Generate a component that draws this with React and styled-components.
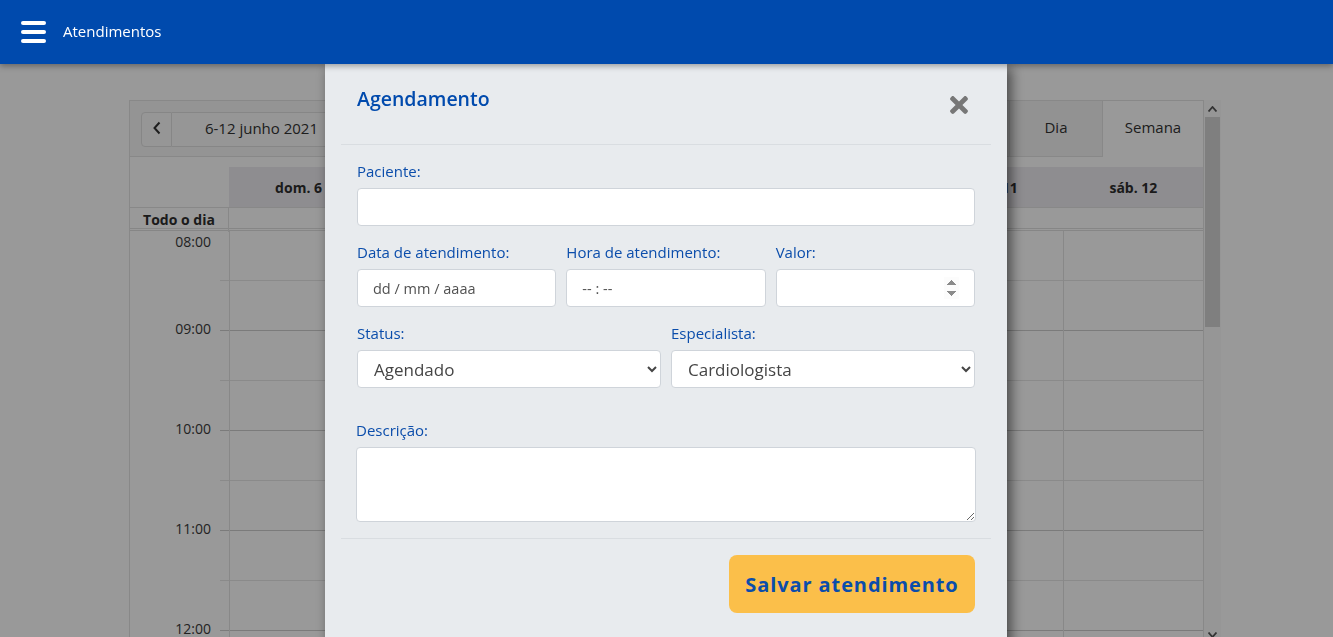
import React from 'react'
import styled, { createGlobalStyle } from 'styled-components'
import { FaTimes } from 'react-icons/fa'

const GlobalStyle = createGlobalStyle`
  html, body {
    margin: 0;
    padding: 0;
    height: 100%;
    overflow: hidden;
    background: #fff;
    font-family: "Open Sans", "Liberation Sans", sans-serif;
  }
  * { box-sizing: border-box; }
`

const Header = styled.header`
  position: relative;
  z-index: 30;
  height: 64px;
  background: #004aad;
  display: flex;
  align-items: center;
  padding-left: 21px;
  gap: 17px;
  box-shadow: 0 2px 6px rgba(0, 0, 0, 0.35);
`
const Title = styled.span`
  color: #fff;
  font-size: 15px;
  margin-top: -2px;
`

const Page = styled.main`
  padding: 36px 0 0 129px;
`

const Frame = styled.div`
  width: 1092px;
  height: 543px;
  display: flex;
  overflow: hidden;
`
const Calendar = styled.div`
  flex: 1;
  border: 1px solid #e3e3e3;
  border-bottom: none;
  color: #333;
  font-size: 14px;
`
const Toolbar = styled.div`
  height: 56px;
  background: #f7f7f7;
  border-bottom: 1px solid #e3e3e3;
  display: flex;
  justify-content: space-between;
`
const NavGroup = styled.div`
  display: flex;
  align-items: center;
  padding-left: 11px;
  padding-top: 1px;
`
const NavButton = styled.div`
  height: 35px;
  display: flex;
  align-items: center;
  justify-content: center;
  border: 1px solid #e0e0e0;
  background: #fafafa;
  width: ${p => p.$w}px;
  border-radius: ${p => (p.$first ? '4px 0 0 4px' : '0')};
  border-left: ${p => (p.$first ? '1px solid #e0e0e0' : 'none')};
  font-size: 15px;
  color: #333;
  padding-bottom: 2px;
`
const Tabs = styled.div`
  display: flex;
`
const Tab = styled.div`
  width: ${p => p.$w}px;
  height: ${p => (p.$active ? '56px' : '55px')};
  display: flex;
  align-items: center;
  justify-content: center;
  padding-bottom: ${p => (p.$active ? '5px' : '4px')};
  border-left: 1px solid #e3e3e3;
  background: ${p => (p.$active ? '#fff' : '#f3f3f3')};
  font-size: 15px;
  color: #333;
`

const HeadRow = styled.div`
  margin-top: 10px;
  display: grid;
  grid-template-columns: 99px repeat(7, 1fr);
  height: 40px;
`
const DayHead = styled.div`
  background: #edebf0;
  display: flex;
  align-items: center;
  justify-content: center;
  font-weight: 700;
  font-size: 14px;
  color: #2e2e2e;
`
const AllDayRow = styled.div`
  display: grid;
  grid-template-columns: 99px 1fr;
  height: 24px;
  border-top: 1px solid #e3e3e3;
  border-bottom: 3px double #e0e0e0;
`
const AllDayLabel = styled.div`
  border-right: 1px solid #e3e3e3;
  text-align: center;
  font-weight: 700;
  font-size: 14px;
  line-height: 24px;
  color: #2e2e2e;
`

const Body = styled.div`
  display: grid;
  grid-template-columns: 100px 1fr;
`
const slotLines = `repeating-linear-gradient(to bottom, transparent 0 49px, #e6e6e6 49px 50px, transparent 50px 99px, #cdcdcd 99px 100px)`

const TimeAxis = styled.div`
  border-right: 1px solid #e3e3e3;
  background: ${slotLines} right top / 9px 100% no-repeat;
  padding-top: 1px;
`
const HourLabel = styled.div`
  height: ${p => (p.$first ? '87px' : '100px')};
  line-height: 19px;
  text-align: right;
  padding-right: 18px;
  font-size: 14px;
  color: #3a3a3a;
`
const Lanes = styled.div`
  display: grid;
  grid-template-columns: repeat(7, 1fr);
  height: 600px;
  background: ${slotLines};
`
const Lane = styled.div`
  border-right: 1px solid #e3e3e3;
  &:last-child { border-right: none; }
`

const ScrollTrack = styled.div`
  width: 17px;
  background: #fafafa;
  display: flex;
  flex-direction: column;
`
const ScrollArrow = styled.div`
  height: 17px;
  display: flex;
  align-items: center;
  justify-content: center;
`
const ScrollThumb = styled.div`
  height: 210px;
  margin: 0 1px;
  background: #d4d4d4;
`
const ScrollRest = styled.div`
  flex: 1;
`

const Backdrop = styled.div`
  position: fixed;
  inset: 0;
  z-index: 10;
  background: rgba(0, 0, 0, 0.4);
`

const Modal = styled.div`
  position: fixed;
  z-index: 20;
  top: 64px;
  left: 325px;
  width: 682px;
  background: #e8ebee;
  padding: 0 16px 40px;
  box-shadow: 4px 4px 12px rgba(0, 0, 0, 0.55);
`
const ModalHead = styled.div`
  height: 81px;
  display: flex;
  justify-content: space-between;
  align-items: flex-start;
  padding: 23px 19px 0 16px;
  border-bottom: 1px solid #d9dde1;
`
const ModalTitle = styled.h2`
  margin: 0;
  font-size: 19.5px;
  line-height: 24px;
  font-weight: 600;
  color: #004aad;
`
const Close = styled.div`
  color: #777;
  font-size: 26px;
  margin-top: 5px;
  display: flex;
`
const Form = styled.div`
  padding: 16px;
  border-bottom: 1px solid #d9dde1;
  display: flex;
  flex-direction: column;
`
const Row = styled.div`
  display: grid;
  grid-template-columns: ${p => p.$cols};
  gap: 10px;
  margin-top: ${p => p.$top || 0}px;
`
const Field = styled.div`
  display: flex;
  flex-direction: column;
  gap: 7px;
`
const Label = styled.label`
  font-size: 15px;
  line-height: 20px;
  color: #0b4dab;
`
const TextInput = styled.input`
  height: 38px;
  width: 100%;
  border: 1px solid #cfd4da;
  border-radius: 4px;
  background: #fff;
  padding: 0 15px;
  font-family: "Open Sans", sans-serif;
  font-size: 14.5px;
  color: #444;
  &::placeholder { color: #505050; }
  &::-webkit-inner-spin-button {
    opacity: 1;
    height: 22px;
  }
`
const Select = styled.select`
  height: 38px;
  width: 100%;
  border: 1px solid #cfd4da;
  border-radius: 4px;
  background: #fff;
  padding: 0 12px;
  font-family: "Open Sans", sans-serif;
  font-size: 17px;
  color: #454545;
`
const DescField = styled(Field)`
  margin: 32px -1px 0;
`
const TextArea = styled.textarea`
  height: 75px;
  width: 100%;
  border: 1px solid #cfd4da;
  border-radius: 4px;
  background: #fff;
  resize: vertical;
`
const Footer = styled.div`
  display: flex;
  justify-content: flex-end;
  padding: 16px 16px 0;
`
const SaveButton = styled.button`
  height: 58px;
  width: 246px;
  border: none;
  border-radius: 8px;
  background: #fbbf4a;
  color: #0b4dab;
  font-family: "Open Sans", sans-serif;
  font-weight: 700;
  font-size: 20px;
  letter-spacing: 0.9px;
`

const days = ['dom. 6', 'seg. 7', 'ter. 8', 'qua. 9', 'qui. 10', 'sex. 11', 'sáb. 12']
const hours = ['08:00', '09:00', '10:00', '11:00', '12:00', '13:00']

function Burger() {
  return (
    <svg width="25" height="22" viewBox="0 0 25 22">
      <rect x="0" y="0" width="25" height="4" rx="2" fill="#fff" />
      <rect x="0" y="9" width="25" height="4" rx="2" fill="#fff" />
      <rect x="0" y="18" width="25" height="4" rx="2" fill="#fff" />
    </svg>
  )
}

function Arrow({ up }) {
  return (
    <svg width="9" height="6" viewBox="0 0 9 6">
      <path d={up ? 'M0.5 5.5 L4.5 1 L8.5 5.5' : 'M0.5 0.5 L4.5 5 L8.5 0.5'} fill="none" stroke="#555" strokeWidth="1.8" />
    </svg>
  )
}

export default function App() {
  return (
    <>
      <GlobalStyle />
      <Header>
        <Burger />
        <Title>Atendimentos</Title>
      </Header>

      <Page>
        <Frame>
          <Calendar>
            <Toolbar>
              <NavGroup>
                <NavButton $first $w={31}>
                  <svg width="10" height="14" viewBox="0 0 10 14">
                    <path d="M7.5 1.5 L2.5 7 L7.5 12.5" fill="none" stroke="#333" strokeWidth="2" />
                  </svg>
                </NavButton>
                <NavButton $w={180}>6-12 junho 2021</NavButton>
              </NavGroup>
              <Tabs>
                <Tab $w={93}>Mês</Tab>
                <Tab $w={93}>Dia</Tab>
                <Tab $w={101} $active>Semana</Tab>
              </Tabs>
            </Toolbar>

            <HeadRow>
              <div />
              {days.map(d => <DayHead key={d}>{d}</DayHead>)}
            </HeadRow>
            <AllDayRow>
              <AllDayLabel>Todo o dia</AllDayLabel>
              <div />
            </AllDayRow>

            <Body>
              <TimeAxis>
                {hours.map((h, i) => <HourLabel key={h} $first={i === 0}>{h}</HourLabel>)}
              </TimeAxis>
              <Lanes>
                {days.map(d => <Lane key={d} />)}
              </Lanes>
            </Body>
          </Calendar>

          <ScrollTrack>
            <ScrollArrow><Arrow up /></ScrollArrow>
            <ScrollThumb />
            <ScrollRest />
            <ScrollArrow><Arrow /></ScrollArrow>
          </ScrollTrack>
        </Frame>
      </Page>

      <Backdrop />

      <Modal>
        <ModalHead>
          <ModalTitle>Agendamento</ModalTitle>
          <Close><FaTimes /></Close>
        </ModalHead>

        <Form>
          <Field>
            <Label>Paciente:</Label>
            <TextInput type="text" />
          </Field>

          <Row $cols="1fr 1fr 1fr" $top={16}>
            <Field>
              <Label>Data de atendimento:</Label>
              <TextInput type="text" placeholder="dd / mm / aaaa" />
            </Field>
            <Field>
              <Label>Hora de atendimento:</Label>
              <TextInput type="text" placeholder="-- : --" />
            </Field>
            <Field>
              <Label>Valor:</Label>
              <TextInput type="number" />
            </Field>
          </Row>

          <Row $cols="1fr 1fr" $top={16}>
            <Field>
              <Label>Status:</Label>
              <Select defaultValue="Agendado">
                <option>Agendado</option>
                <option>Confirmado</option>
                <option>Cancelado</option>
              </Select>
            </Field>
            <Field>
              <Label>Especialista:</Label>
              <Select defaultValue="Cardiologista">
                <option>Cardiologista</option>
                <option>Clínico geral</option>
              </Select>
            </Field>
          </Row>

          <DescField>
            <Label>Descrição:</Label>
            <TextArea />
          </DescField>
        </Form>

        <Footer>
          <SaveButton>Salvar atendimento</SaveButton>
        </Footer>
      </Modal>
    </>
  )
}
